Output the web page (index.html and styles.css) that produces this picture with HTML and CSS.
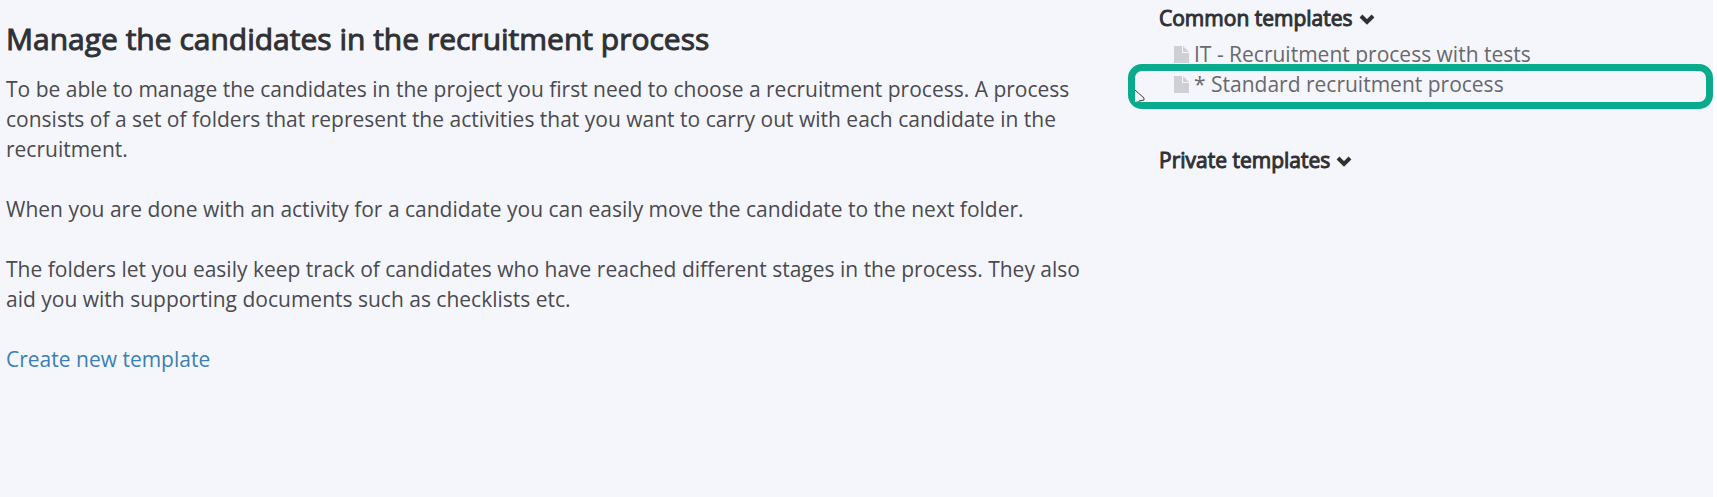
FILE: index.html
```html
<!DOCTYPE html>
<html lang="en">
<head>
    <meta charset="UTF-8">
    <meta name="viewport" content="width=device-width, initial-scale=1.0">
    <title>Recruitment process</title>
    <link rel="stylesheet" href="styles.css">
</head>
<body>
    <main class="page">
        <section class="intro">
            <h1>Manage the candidates in the recruitment process</h1>
            <p>To be able to manage the candidates in the project you first need to choose a recruitment process. A process consists of a set of folders that represent the activities that you want to carry out with each candidate in the recruitment.</p>
            <p>When you are done with an activity for a candidate you can easily move the candidate to the next folder.</p>
            <p>The folders let you easily keep track of candidates who have reached different stages in the process. They also aid you with supporting documents such as checklists etc.</p>
            <a class="create-link" href="#">Create new template</a>
        </section>

        <!-- Template lists -->
        <aside class="templates">
            <button class="group-btn" type="button">Common templates
                <svg class="chevron" viewBox="0 0 16 12"><path d="M2 4l6 6 6-6"/></svg>
            </button>
            <ul class="template-list">
                <li>
                    <a class="template" href="#">
                        <svg class="file-icon" viewBox="0 0 15 17"><path d="M0 0h8v7h7v10H0z"/><path d="M9 0l6 6H9z"/></svg>
                        IT - Recruitment process with tests
                    </a>
                </li>
                <li class="selected">
                    <a class="template" href="#">
                        <svg class="file-icon" viewBox="0 0 15 17"><path d="M0 0h8v7h7v10H0z"/><path d="M9 0l6 6H9z"/></svg>
                        * Standard recruitment process
                    </a>
                    <div class="highlight">
                        <svg class="cursor" viewBox="0 0 11 14"><path class="cursor-fill" d="M0 0l9 8v2l-5 1-4 1z"/><path class="cursor-line" d="M0 0l9 8v2l-5 1"/></svg>
                    </div>
                </li>
            </ul>
            <button class="group-btn" type="button">Private templates
                <svg class="chevron" viewBox="0 0 16 12"><path d="M2 4l6 6 6-6"/></svg>
            </button>
        </aside>
    </main>
</body>
</html>
```

FILE: styles.css
```css
* {
    margin: 0;
    padding: 0;
    box-sizing: border-box;
}

body {
    font-family: 'Open Sans', sans-serif;
    font-size: 21px;
    line-height: 30px;
    color: #4a4a4f;
    background-color: #ffffff;
}

.page {
    display: grid;
    grid-template-columns: 2fr 1fr;
    min-height: 100vh;
    margin-right: 4px;
    background-color: #f5f6fc;
}

.intro {
    padding: 19px 40px 20px 6px;
}

h1 {
    font-size: 30px;
    line-height: 40px;
    font-weight: 400;
    color: #303135;
    -webkit-text-stroke: 1px #303135;
    margin-bottom: 15px;
}

p {
    margin-bottom: 30px;
}

a {
    text-decoration: none;
}

.create-link {
    color: #3a7fb5;
}

.templates {
    padding: 3px 0 20px 17px;
}

.group-btn {
    display: flex;
    align-items: center;
    gap: 6px;
    font: inherit;
    color: #303135;
    -webkit-text-stroke: 1px #303135;
    background: none;
    border: none;
    cursor: pointer;
}

.chevron {
    width: 16px;
    height: 12px;
    fill: none;
    stroke: #303135;
    stroke-width: 4;
    overflow: visible;
}

.template-list {
    list-style: none;
    margin: 6px 0 46px;
}

.template {
    display: flex;
    align-items: center;
    gap: 5px;
    padding-left: 15px;
    color: #68686d;
}

.file-icon {
    width: 15px;
    height: 17px;
    fill: #cfd0d5;
}

.selected {
    position: relative;
}

/* Frame around the chosen template */
.highlight {
    position: absolute;
    top: -5px;
    right: 0;
    left: -31px;
    height: 45px;
    border: 7px solid #0aab8d;
    border-radius: 14px;
}

.cursor {
    position: absolute;
    top: 19px;
    left: 0;
    width: 11px;
    height: 14px;
}

.cursor-fill {
    fill: #f5f6fc;
}

.cursor-line {
    fill: none;
    stroke: #3c3c40;
}
```
